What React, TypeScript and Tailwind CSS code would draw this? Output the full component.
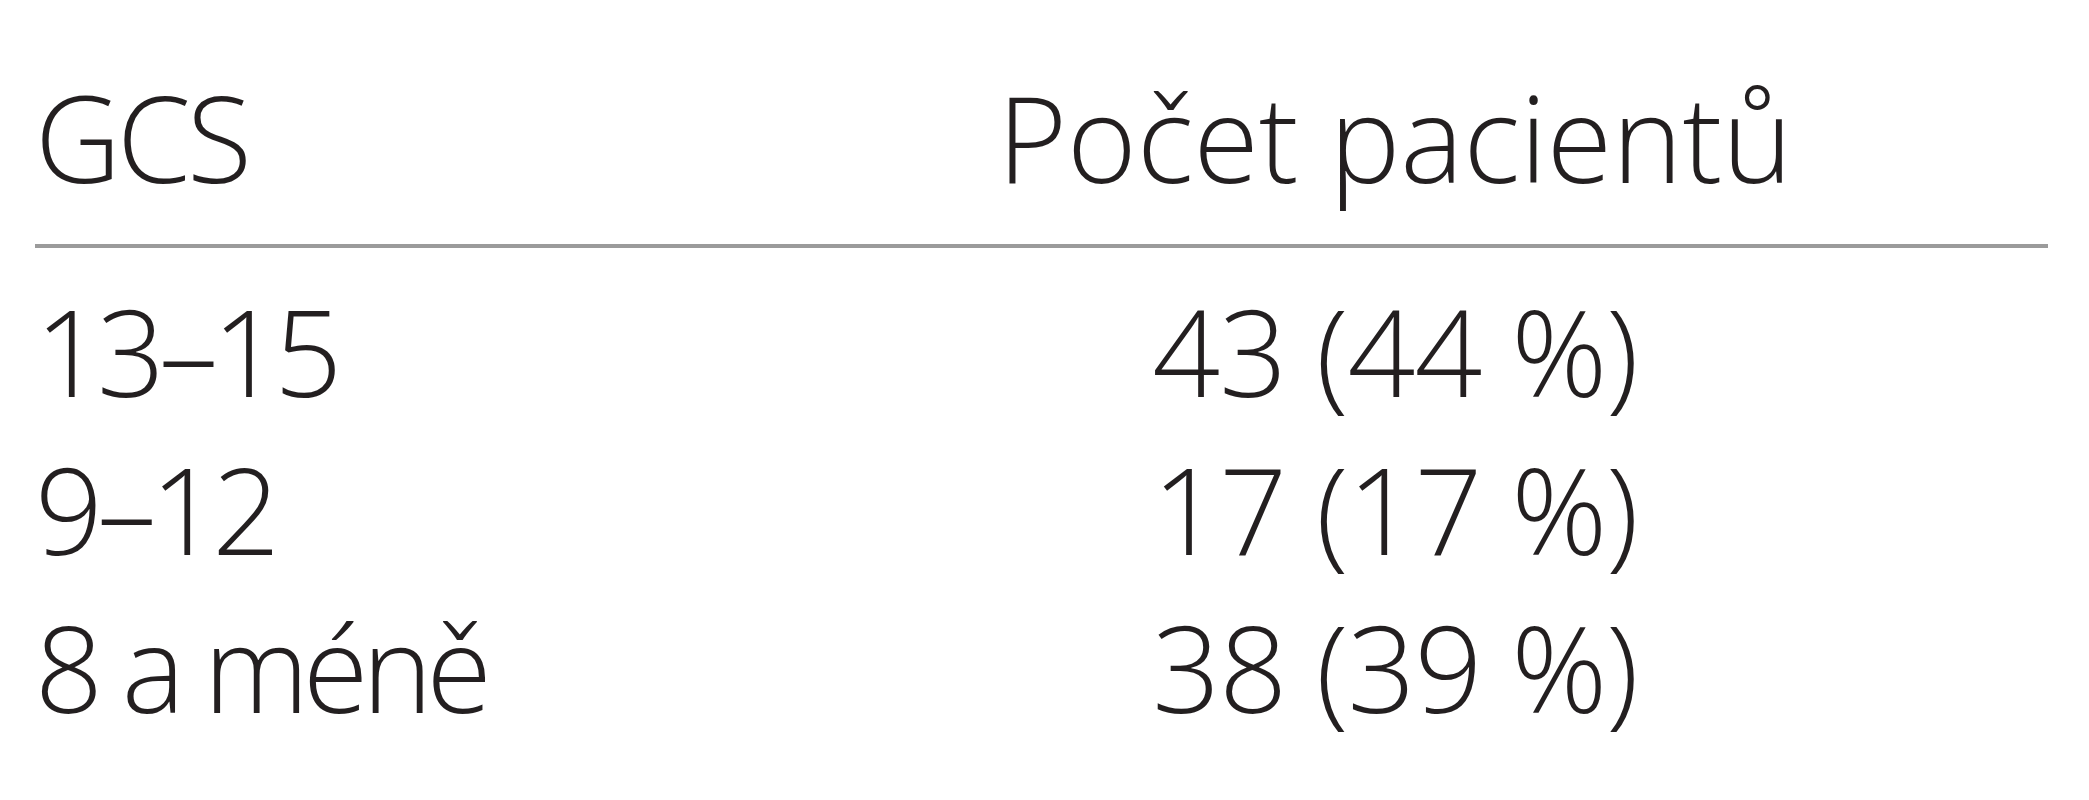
const rows = [
  { gcs: "13–15", count: "43 (44 %)" },
  { gcs: "9–12", count: "17 (17 %)" },
  { gcs: "8 a méně", count: "38 (39 %)" },
];

export default function App() {
  return (
    <div className="min-h-screen w-[2089px] bg-white text-[#231f20] font-['Open_Sans',sans-serif] font-[350] text-[119px] leading-[158px]">
      <div className="ml-[35px] w-[2013px] pt-[58px]">
        {/* Header */}
        <div className="grid grid-cols-[955px_810px]">
          <div className="tracking-[-4px]">GCS</div>
          <div className="text-center">Počet pacientů</div>
        </div>
        <div className="mt-[28px] h-[4px] bg-[#9b9b9b]" />
        {/* Body */}
        <div className="mt-[24px]">
          {rows.map((r) => (
            <div key={r.gcs} className="grid grid-cols-[955px_810px]">
              <div className="tracking-[-6px]">{r.gcs}</div>
              <div className="text-center tracking-[-1px]">{r.count}</div>
            </div>
          ))}
        </div>
      </div>
    </div>
  );
}
